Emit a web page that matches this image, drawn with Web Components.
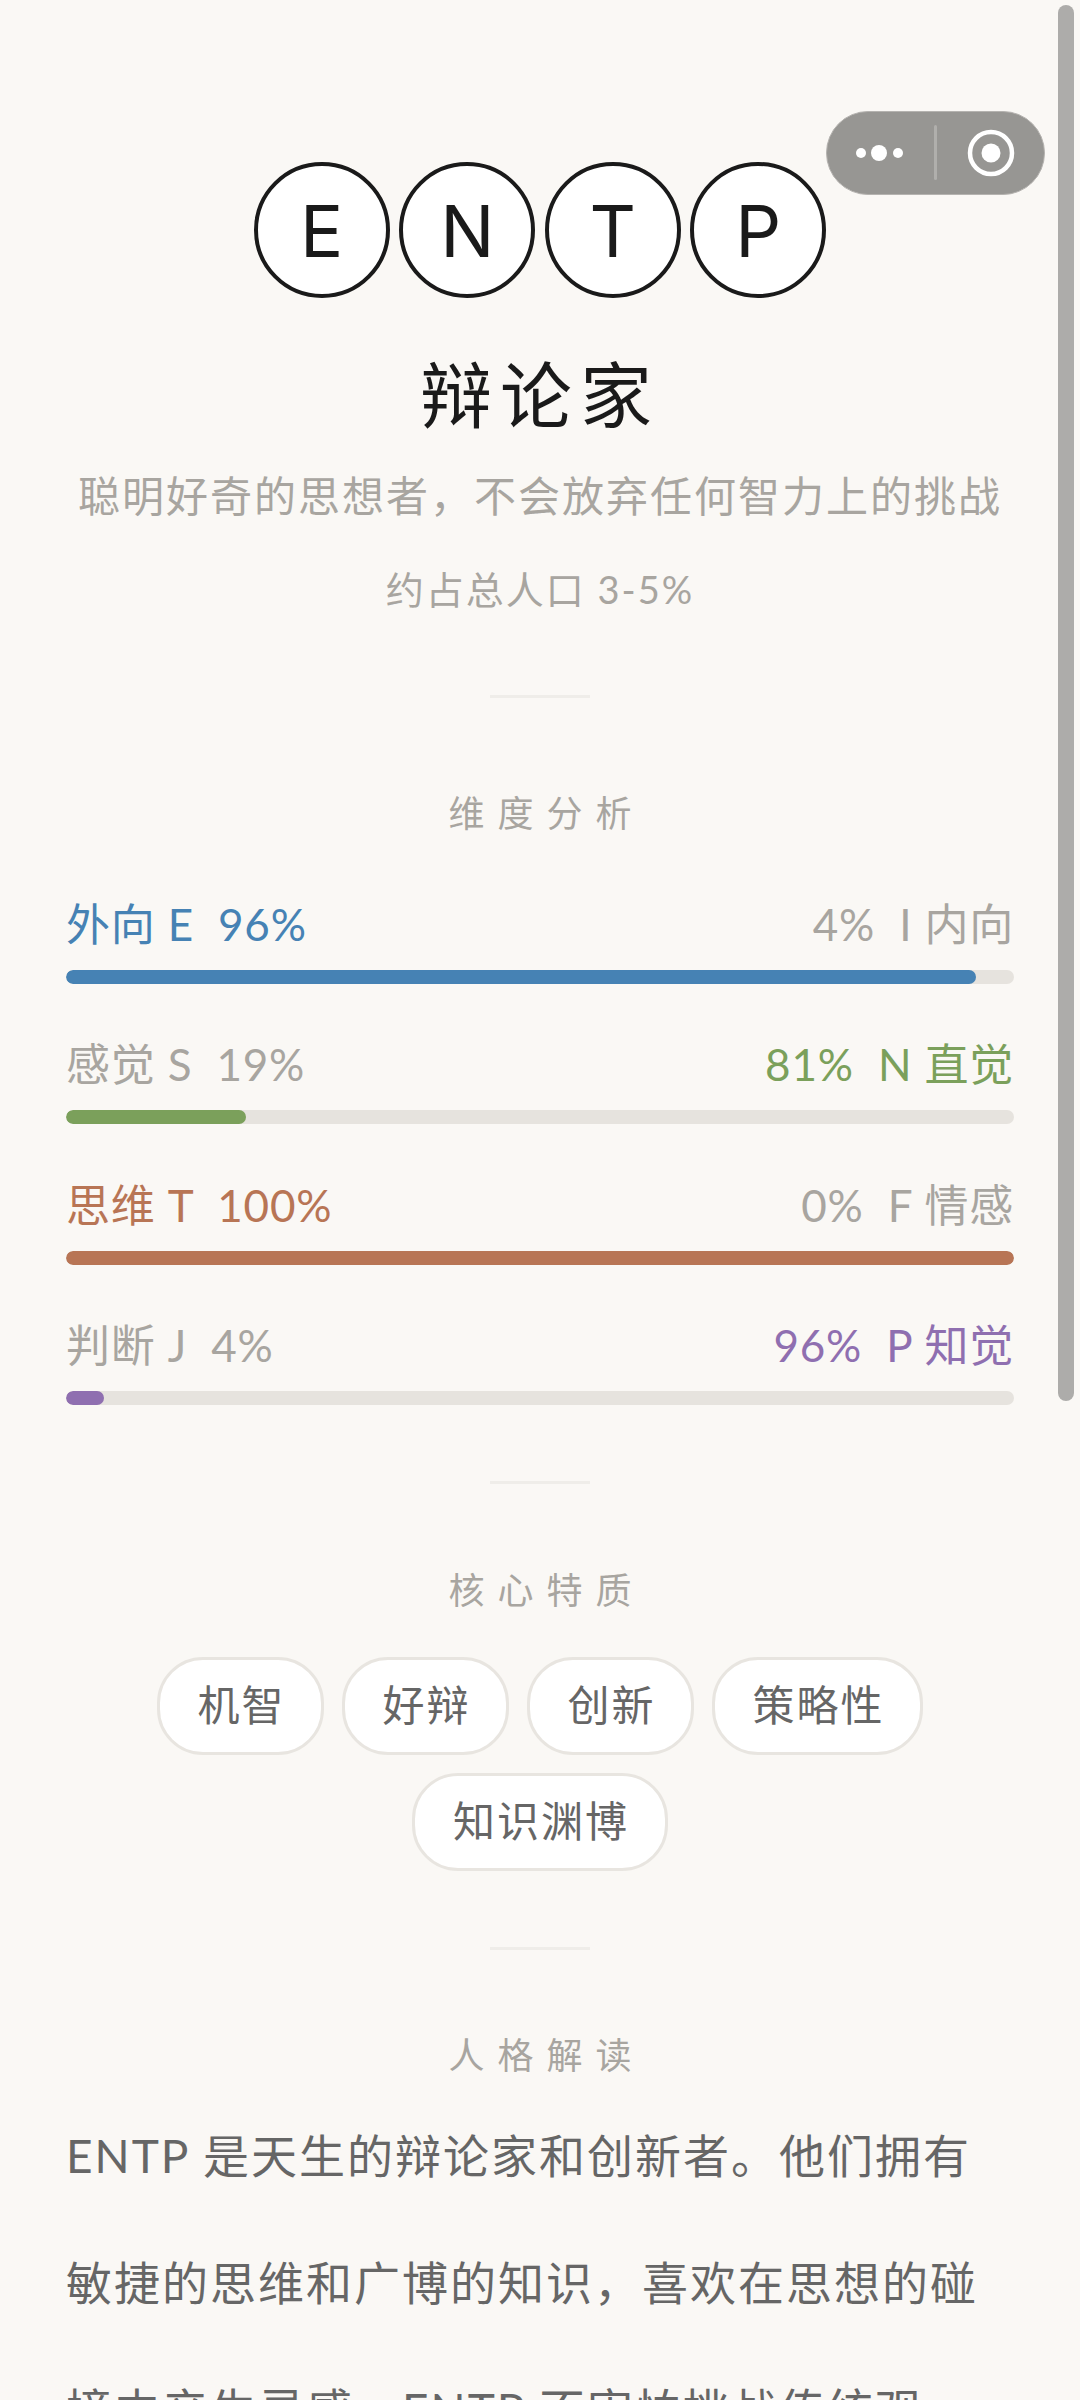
<!DOCTYPE html>
<html lang="zh-CN"><head><meta charset="utf-8">
<style>
html,body{margin:0;height:2400px;overflow:hidden;background:#faf8f5}
body{font-family:Lato,"Noto Sans CJK SC",sans-serif;font-weight:400;position:relative}
</style></head><body>
<mbti-page></mbti-page>
<wx-capsule></wx-capsule>
<scroll-thumb></scroll-thumb>
<template id="t-page"><style>
:host{display:block;padding:162px 66px 0;box-sizing:border-box;width:1080px}
.hero{display:flex;flex-direction:column;align-items:center}
.letters{display:flex;gap:9.5px}
h1{margin:48px 0 0;font-size:72px;line-height:96px;font-weight:400;letter-spacing:8px;color:#1a1a1a}
.sub{margin:24px 0 0;font-size:42px;line-height:60px;letter-spacing:2px;color:#a8a5a0;white-space:nowrap}
.pop{margin:33px 0 0;font-size:38px;line-height:60px;letter-spacing:2px;color:#a8a5a0}
.bars{display:flex;flex-direction:column;gap:0}
.chips{display:flex;flex-wrap:wrap;justify-content:center;gap:18px;margin:0 -10px}
p{margin:0;font-size:46px;line-height:127px;letter-spacing:2px;color:#666;}
</style>
<div class="hero">
<div class="letters"><mbti-letter>E</mbti-letter><mbti-letter>N</mbti-letter><mbti-letter>T</mbti-letter><mbti-letter>P</mbti-letter></div>
<h1>辩论家</h1>
<div class="sub">聪明好奇的思想者&#xFF0C;不会放弃任何智力上的挑战</div>
<div class="pop">约占总人口 3-5%</div>
</div>
<sec-divider style="--mt:76px"></sec-divider>
<sec-title style="--mt:91px;--mb:57px">维度分析</sec-title>
<div class="bars">
<dim-bar left="外向 E&#160;&#160;96%" right="4%&#160;&#160;I 内向" pct="96" color="#4682b4" side="l"></dim-bar>
<dim-bar left="感觉 S&#160;&#160;19%" right="81%&#160;&#160;N 直觉" pct="19" color="#7ba05b" side="r"></dim-bar>
<dim-bar left="思维 T&#160;&#160;100%" right="0%&#160;&#160;F 情感" pct="100" color="#b87555" side="l"></dim-bar>
<dim-bar left="判断 J&#160;&#160;4%" right="96%&#160;&#160;P 知觉" pct="4" color="#8f6fb0" side="r"></dim-bar>
</div>
<sec-divider style="--mt:26px"></sec-divider>
<sec-title style="--mt:82px;--mb:43px">核心特质</sec-title>
<div class="chips"><trait-chip>机智</trait-chip><trait-chip>好辩</trait-chip><trait-chip>创新</trait-chip><trait-chip>策略性</trait-chip><trait-chip>知识渊博</trait-chip></div>
<sec-divider style="--mt:76px"></sec-divider>
<sec-title style="--mt:81px;--mb:13px">人格解读</sec-title>
<p>ENTP 是天生的辩论家和创新者。他们拥有敏捷的思维和广博的知识&#xFF0C;喜欢在思想的碰撞中产生灵感。ENTP 不害怕挑战传统观念&#xFF0C;总能发现别人忽略的可能性。</p>
</template>
<template id="t-letter"><style>
:host{display:flex;align-items:center;justify-content:center;width:136px;height:136px;box-sizing:border-box;border:4px solid #1a1a1a;border-radius:50%;background:#fff;font-size:72px;font-weight:400;color:#1a1a1a;font-family:Inter,sans-serif}
</style><slot></slot></template>
<template id="t-div"><style>
:host{display:block;width:100px;height:3px;background:#efede9;margin:var(--mt) auto 0}
</style></template>
<template id="t-title"><style>
:host{display:block;margin:var(--mt) 0 var(--mb);text-align:center;text-indent:13px;font-size:36px;line-height:48px;letter-spacing:13px;color:#a8a5a0}
</style><slot></slot></template>
<template id="t-bar"><style>
:host{display:block;height:140.3px}
.row{display:flex;justify-content:space-between;font-size:44px;letter-spacing:.8px;line-height:60px;color:#a8a5a0;margin-bottom:16px;white-space:nowrap}
.on{color:var(--c)}
.track{height:14px;border-radius:7px;background:#e6e3de;overflow:hidden}
.fill{height:100%;border-radius:7px;background:var(--c)}
</style><div class="row"><span id="l"></span><span id="r"></span></div><div class="track"><div class="fill"></div></div></template>
<template id="t-chip"><style>
:host{display:block;box-sizing:border-box;height:98px;padding:0 35.5px 0 37.5px;border:3px solid #e8e5e0;border-radius:46px;background:#fff;font-size:42px;line-height:90px;letter-spacing:2px;color:#666}
</style><slot></slot></template>
<template id="t-cap"><style>
:host{position:absolute;left:826px;top:111px;width:219px;height:84px;box-sizing:border-box;border:1px solid #b5b3b0;border-radius:42px;background:#979693;display:block}
svg{display:block;position:absolute;left:-1px;top:-1px}
</style><svg width="219" height="84" viewBox="0 0 219 84"><circle cx="35" cy="42" r="5" fill="#fff"/><circle cx="53" cy="42" r="8" fill="#fff"/><circle cx="72" cy="42" r="5" fill="#fff"/><rect x="108" y="14" width="3" height="55" rx="1.5" fill="#b0afac"/><circle cx="165" cy="42" r="21" fill="none" stroke="#fff" stroke-width="4.5"/><circle cx="165" cy="42" r="9.5" fill="#fff"/></svg></template>
<template id="t-thumb"><style>
:host{position:absolute;left:1058px;top:5px;width:16px;height:1396px;border-radius:8px;background:#adacaa;display:block}
</style></template>
<script>
function def(name,tid,init){customElements.define(name,class extends HTMLElement{constructor(){super();this.attachShadow({mode:'open'}).appendChild(document.getElementById(tid).content.cloneNode(true))}connectedCallback(){if(init)init(this,this.shadowRoot)}})}
def('mbti-page','t-page');
def('mbti-letter','t-letter');
def('sec-divider','t-div');
def('sec-title','t-title');
def('trait-chip','t-chip');
def('wx-capsule','t-cap');
def('scroll-thumb','t-thumb');
def('dim-bar','t-bar',(el,s)=>{
 el.style.setProperty('--c',el.getAttribute('color'));
 const l=s.getElementById('l'),r=s.getElementById('r');
 l.textContent=el.getAttribute('left');r.textContent=el.getAttribute('right');
 (el.getAttribute('side')==='l'?l:r).className='on';
 s.querySelector('.fill').style.width=el.getAttribute('pct')+'%';
});
</script>
</body></html>
